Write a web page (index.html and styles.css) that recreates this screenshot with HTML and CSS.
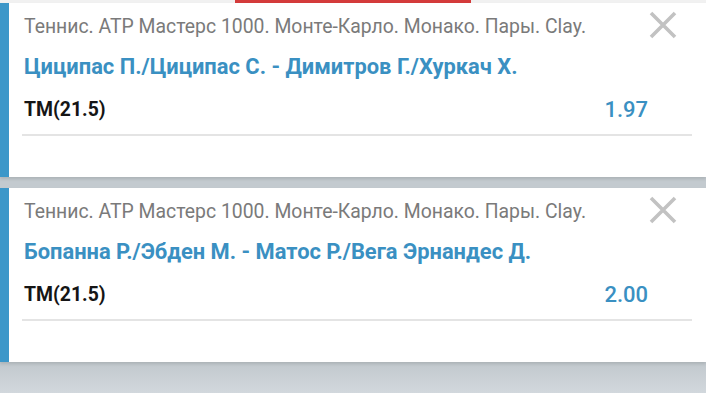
FILE: index.html
```html
<!DOCTYPE html>
<html lang="ru">
<head>
<meta charset="utf-8">
<link rel="stylesheet" href="styles.css">
</head>
<body>
<div class="topbar"><div class="indicator"></div></div>
<div class="list">
  <div class="card">
    <div class="accent"></div>
    <div class="content">
      <div class="head">
        <span class="league">Теннис. АТР Мастерс 1000. Монте-Карло. Монако. Пары. Clay.</span>
        <svg class="close" width="28" height="28" viewBox="0 0 28 28"><path d="M2 2L26 26M26 2L2 26" stroke="#c2c2c2" stroke-width="3.6" fill="none"/></svg>
      </div>
      <div class="match">Циципас П./Циципас С. - Димитров Г./Хуркач Х.</div>
      <div class="bet">
        <span class="market">ТМ(21.5)</span>
        <span class="odds">1.97</span>
      </div>
      <div class="sep"></div>
    </div>
  </div>
  <div class="card">
    <div class="accent"></div>
    <div class="content">
      <div class="head">
        <span class="league">Теннис. АТР Мастерс 1000. Монте-Карло. Монако. Пары. Clay.</span>
        <svg class="close" width="28" height="28" viewBox="0 0 28 28"><path d="M2 2L26 26M26 2L2 26" stroke="#c2c2c2" stroke-width="3.6" fill="none"/></svg>
      </div>
      <div class="match">Бопанна Р./Эбден М. - Матос Р./Вега Эрнандес Д.</div>
      <div class="bet">
        <span class="market">ТМ(21.5)</span>
        <span class="odds">2.00</span>
      </div>
      <div class="sep"></div>
    </div>
  </div>
</div>
</body>
</html>
```
FILE: styles.css
```css
html, body {
  margin: 0;
  padding: 0;
}
body {
  width: 706px;
  height: 393px;
  overflow: hidden;
  font-family: Roboto, "Liberation Sans", sans-serif;
  background: linear-gradient(#c3cacf 0, #c3cacf 365px, #d2d8dd 393px);
}
.topbar {
  height: 3px;
  background: #f1f1f1;
}
.indicator {
  margin-left: 235px;
  width: 236px;
  height: 3px;
  background: #d43b3b;
}
.list {
  display: flex;
  flex-direction: column;
  gap: 11px;
}
.card {
  display: flex;
  height: 174px;
  background: #fff;
  box-shadow: 0 2px 3px rgba(0,0,0,0.12);
}
.accent {
  width: 9px;
  background: #3c97c9;
  flex: none;
}
.content {
  flex: 1;
  padding-left: 15px;
  padding-top: 1px;
  display: flex;
  flex-direction: column;
}
.head {
  height: 44px;
  display: flex;
  align-items: center;
  justify-content: space-between;
  padding-right: 29px;
}
.league {
  font-size: 19.4px;
  color: #7a7a7a;
}
.close {
  display: block;
  margin-top: -3px;
}
.match {
  height: 38px;
  line-height: 38px;
  font-size: 21.9px;
  font-weight: bold;
  color: #3a90c2;
}
.bet {
  height: 46px;
  display: flex;
  align-items: center;
  justify-content: space-between;
  padding-right: 58px;
}
.market {
  font-size: 19.4px;
  font-weight: bold;
  color: #151515;
}
.odds {
  font-size: 22px;
  font-weight: 500;
  color: #3a90c2;
}
.sep {
  margin: 2px 14px 0 -2px;
  height: 2px;
  background: #e4e4e4;
}
```
